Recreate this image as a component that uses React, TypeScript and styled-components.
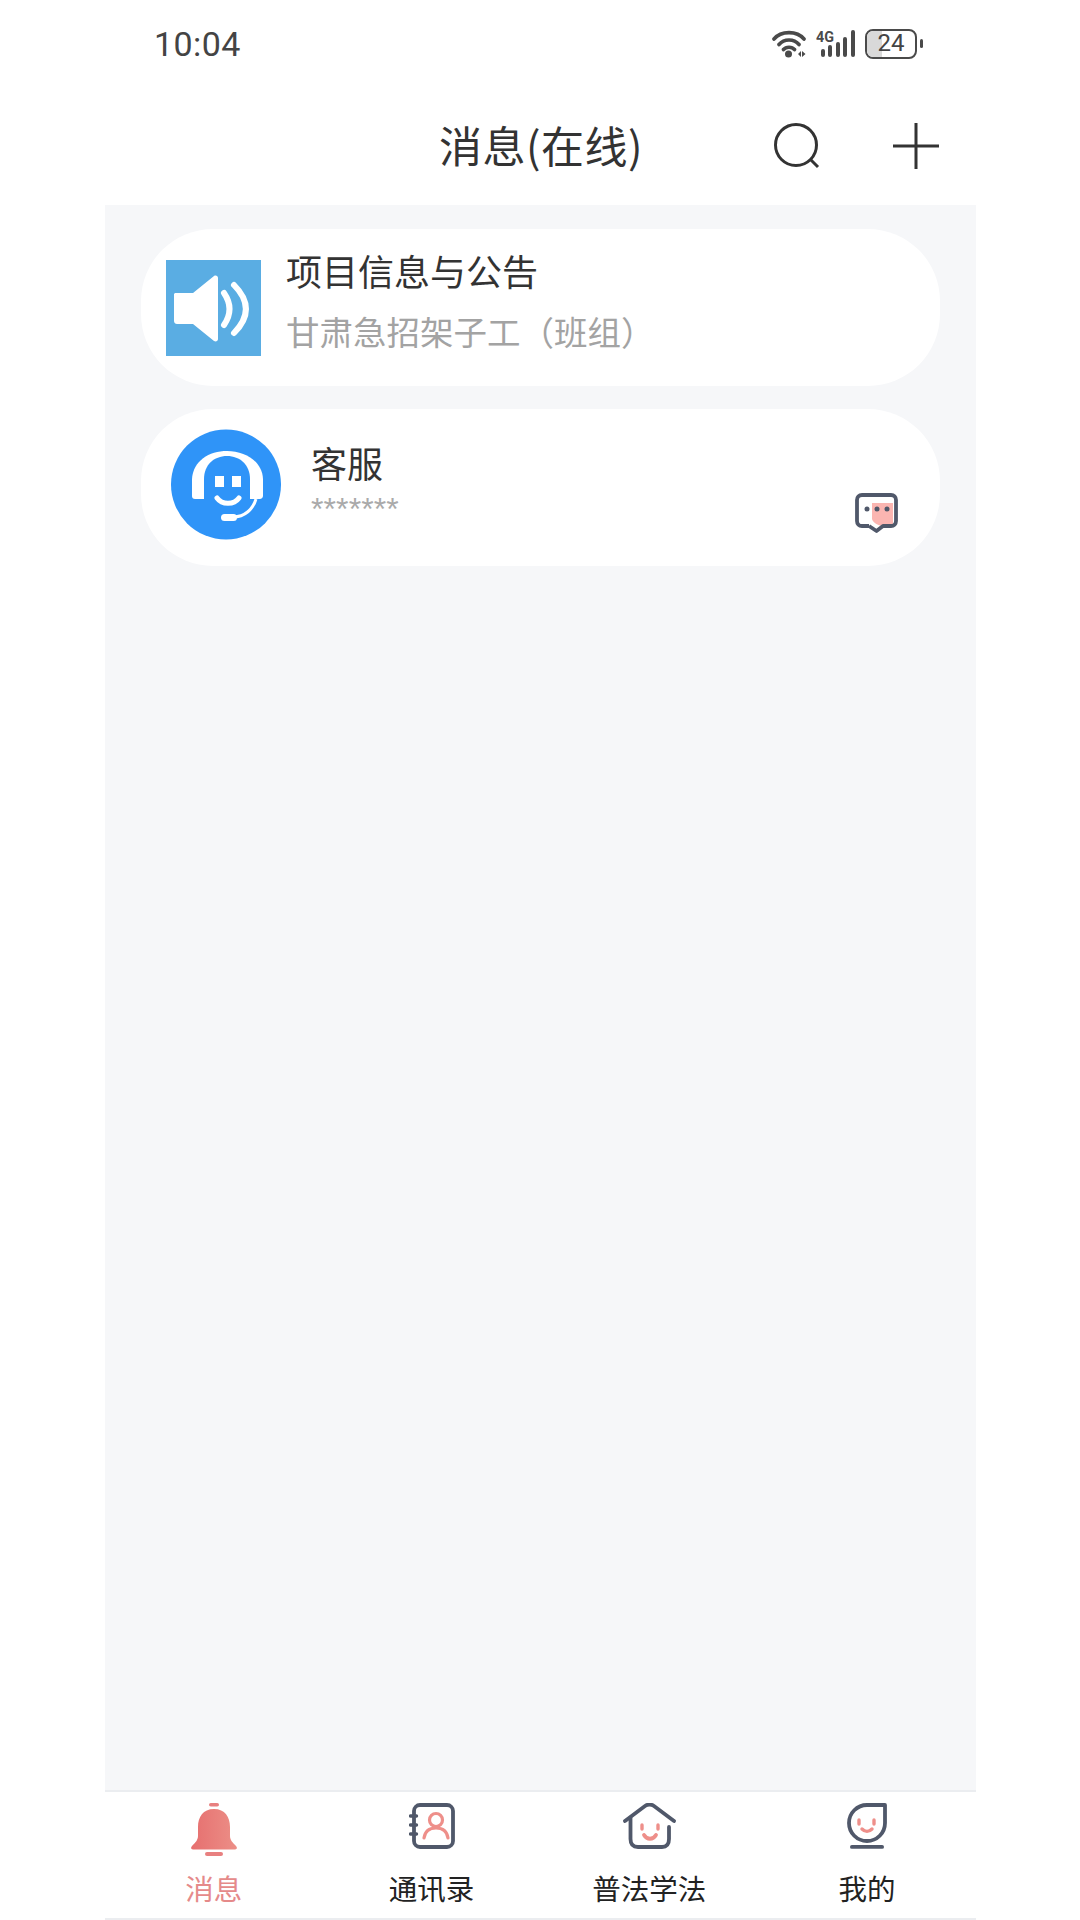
import React from "react";
import styled, { createGlobalStyle } from "styled-components";

const Global = createGlobalStyle`
  html, body { margin: 0; padding: 0; background: #fff; }
  * { box-sizing: border-box; }
  body { font-family: "Noto Sans CJK SC", "Noto Sans", sans-serif; }
`;
const Screen = styled.div`
  width: 871px; height: 1920px; margin-left: 105px; display: flex; flex-direction: column; background: #fff;
`;
const StatusBar = styled.div`
  height: 87px; display: flex; justify-content: space-between; align-items: center; padding: 0 53px 0 49px;
`;
const Clock = styled.span`
  font-family: Roboto, sans-serif; font-size: 34px; color: #444; letter-spacing: 0.4px;
`;
const NavBar = styled.div`
  height: 118px; display: flex; align-items: center; position: relative; padding: 0 37px 0 0; justify-content: flex-end; gap: 73px;
`;
const Title = styled.h1`
  position: absolute; left: 334px; top: 29px; margin: 0; font-size: 43px; line-height: 56px; font-weight: 400; color: #333; letter-spacing: 0.5px;
`;
const Content = styled.main`
  flex: 1; background: #f6f7f9; padding: 24px 36px 0; display: flex; flex-direction: column; gap: 23px;
`;
const Card = styled.div<{ $gap: number; $pad: number }>`
  height: 157px; border-radius: 72px; background: #fff; display: flex; align-items: center;
  gap: ${(p) => p.$gap}px; padding-left: ${(p) => p.$pad}px; position: relative;
`;
const CardText = styled.div<{ $lift: number }>`
  display: flex; flex-direction: column; margin-bottom: ${(p) => p.$lift}px;
`;
const CardTitle = styled.div`
  font-size: 36px; line-height: 50px; color: #333;
`;
const CardSub = styled.div`
  font-size: 33.5px; line-height: 46px; margin-top: 13px; color: #a3a3a3;
`;
const Stars = styled.div`
  font-family: "Liberation Sans", sans-serif; font-size: 32px; line-height: 28px; color: #aaa; margin-top: 8px; letter-spacing: 0.1px;
`;
const AvatarSlot = styled.div`
  display: flex; margin-bottom: 6px;
`;
const ChatBadge = styled.div`
  position: absolute; right: 42px; bottom: 33px; width: 43px; height: 40px; display: flex;
`;
const TabBar = styled.nav`
  height: 130px; border-top: 2px solid #ebedf0; border-bottom: 2px solid #ebedf0; display: grid; grid-template-columns: repeat(4, 1fr); background: #fff;
`;
const Tab = styled.div`
  display: flex; flex-direction: column; align-items: center; padding-top: 11px;
`;
const TabIcon = styled.div`
  height: 56px; display: flex; align-items: flex-start; justify-content: center;
`;
const TabLabel = styled.span<{ $active?: boolean }>`
  font-size: 28.5px; line-height: 40px; margin-top: 9px; color: ${(p) => (p.$active ? "#e58a8a" : "#222")};
`;

const Wifi = () => (
  <svg width="34" height="28" viewBox="0 0 34 28" fill="none">
    <path d="M2 9C9 .5 25 .5 32 9M7 14.500C12 8.500 22 8.500 27 14.500M11.500 19.500C14 16.500 20 16.500 22.500 19.500" stroke="#4a4a4a" strokeWidth="3.600" strokeLinecap="round" />
    <circle cx="16.500" cy="24" r="3.500" fill="#4a4a4a" />
    <path d="M26 24l3-3v6zM30 21l3.500 3-3.500 3z" fill="#4a4a4a" />
  </svg>
);
const Signal = () => (
  <svg width="39" height="34" viewBox="0 -3 39 34">
    <text x="0" y="11.500" fontFamily="Roboto, sans-serif" fontSize="15" fontWeight="700" fill="#4a4a4a" textLength="18" lengthAdjust="spacingAndGlyphs">4G</text>
    {[
      [5, 19, 8],
      [12, 15, 12],
      [20, 12, 15],
      [27, 7, 20],
      [35, 0, 27],
    ].map(([x, y, h]) => (
      <rect key={x} x={x} y={y} width="4" height={h} rx="2" fill="#4a4a4a" />
    ))}
  </svg>
);
const BatteryWrap = styled.div`
  position: relative; width: 52px; height: 30px; border: 2.500px solid #4a4a4a; border-radius: 8px; overflow: hidden;
  display: flex; align-items: center; justify-content: center;
`;
const BatteryFill = styled.div`
  position: absolute; left: 0; top: 0; bottom: 0; width: 15px; background: #d9d9d9;
`;
const BatteryText = styled.span`
  position: relative; font-family: Roboto, sans-serif; font-size: 24px; line-height: 25px; font-weight: 400; color: #444;
`;
const BatteryCap = styled.div`
  width: 3px; height: 9px; background: #4a4a4a; border-radius: 2px;
`;
const StatusIcons = styled.div`
  display: flex; align-items: center; gap: 10px;
`;
const BatteryGroup = styled.div`
  display: flex; align-items: center; gap: 3px;
`;

const Bell = () => (
  <svg width="46" height="53" viewBox="0 0 46 53">
    <defs>
      <linearGradient id="bell" x1="0" x2="1" y1="0" y2="0">
        <stop offset="0" stopColor="#e66f6f" />
        <stop offset="1" stopColor="#ec8f87" />
      </linearGradient>
    </defs>
    <rect x="18" y="0" width="10" height="3.500" rx="1.750" fill="#e88080" />
    <path d="M23 6C12 6 7 14 7 24V33C7 37 4 40 1 43C-.5 44.500 0 46.500 2 46.500H44C46 46.500 46.500 44.500 45 43C42 40 39 37 39 33V24C39 14 34 6 23 6Z" fill="url(#bell)" />
    <rect x="14" y="49" width="18" height="4" rx="2" fill="#e88080" />
  </svg>
);
const Book = () => (
  <svg width="46" height="46" viewBox="0 0 46 46" fill="none">
    <rect x="5" y="2" width="39" height="42" rx="6" stroke="#50586a" strokeWidth="3.800" />
    <path d="M1.500 13h6M1.500 22h6M1.500 31h6" stroke="#50586a" strokeWidth="3.400" strokeLinecap="round" />
    <circle cx="27" cy="17" r="6.500" stroke="#ee8f8a" strokeWidth="3.200" />
    <path d="M15 35C16 28 21 25 27 25S38 28 39 35" stroke="#ee8f8a" strokeWidth="3.200" strokeLinecap="round" />
  </svg>
);
const Home = () => (
  <svg width="53" height="46" viewBox="0 0 53 46" fill="none">
    <path d="M2 18L22 3C25 1 28 1 31 3L51 18" stroke="#50586a" strokeWidth="3.800" strokeLinecap="round" />
    <path d="M7.500 15V36C7.500 41 10 44 15 44H39C44 44 46 41 46 36V24" stroke="#50586a" strokeWidth="3.800" strokeLinecap="round" />
    <path d="M19 22v4M35 22v4" stroke="#ee8f8a" strokeWidth="3.400" strokeLinecap="round" />
    <path d="M21 32C24 37 30 37 33 32" stroke="#ee8f8a" strokeWidth="3.800" strokeLinecap="round" />
  </svg>
);
const Mine = () => (
  <svg width="40" height="46" viewBox="0 0 40 46" fill="none">
    <path d="M20 2H38V20C38 30 30 38 20 38S2 30 2 20 10 2 20 2Z" stroke="#50586a" strokeWidth="3.800" strokeLinejoin="round" />
    <rect x="3" y="42" width="34" height="3.800" rx="1.900" fill="#50586a" />
    <path d="M12 17v4M27 17v4" stroke="#ee8f8a" strokeWidth="3.400" strokeLinecap="round" />
    <path d="M15 26C18 29 22 29 25 26" stroke="#ee8f8a" strokeWidth="3.400" strokeLinecap="round" />
  </svg>
);
const Speaker = () => (
  <svg width="95" height="96" viewBox="0 0 95 96">
    <rect width="95" height="96" fill="#5aade3" />
    <path d="M9 33H27L48 16C50 15 52 16 52 18V79C52 81 50 82 48 81L27 64H11C9.500 64 8 63 8 61V34Z" fill="#fff" />
    <path d="M58 33Q69 49 58 65" stroke="#fff" strokeWidth="6" strokeLinecap="round" fill="none" />
    <path d="M68 25Q92 49 68 73" stroke="#fff" strokeWidth="6" strokeLinecap="round" fill="none" />
  </svg>
);
const Agent = () => (
  <svg width="110" height="111" viewBox="0 0 110 111">
    <circle cx="55" cy="55.500" r="55" fill="#2f94f8" />
    <path d="M21 50C22 32 38 22 56 22S91 32 92 50V67C92 69 90 70 89 70H24C22 70 21 69 21 67Z" fill="#fff" />
    <path d="M33 50C33 36 43 27 56 27S79 36 79 50V72H33Z" fill="#2f94f8" />
    <rect x="33" y="68" width="46" height="6" fill="#2f94f8" />
    <rect x="44" y="47" width="9" height="11" fill="#fff" />
    <rect x="61" y="47" width="9" height="11" fill="#fff" />
    <path d="M46 69C51 76 63 76 68 69" stroke="#fff" strokeWidth="5" strokeLinecap="round" fill="none" />
    <path d="M85 70C82 80 74 88 62 88" stroke="#fff" strokeWidth="3" fill="none" />
    <rect x="50" y="85" width="16" height="7" rx="3.500" fill="#fff" />
  </svg>
);
const Chat = () => (
  <svg width="43" height="40" viewBox="0 0 43 40" fill="none">
    <path d="M17 10H38V33H28C24 33 18 30 17 26Z" fill="#fbb5b1" />
    <path d="M14 33H7C4 33 2 31 2 28V7C2 4 4 2 7 2H36C39 2 41 4 41 7V28C41 31 39 33 36 33H28L21.500 38L14 33" stroke="#50586a" strokeWidth="3.800" strokeLinejoin="round" />
    <circle cx="12" cy="16" r="2.500" fill="#50586a" />
    <circle cx="22" cy="16" r="2.500" fill="#50586a" />
    <circle cx="32" cy="16" r="2.500" fill="#50586a" />
  </svg>
);

export default function App() {
  return (
    <Screen>
      <Global />
      <StatusBar>
        <Clock>10:04</Clock>
        <StatusIcons>
          <Wifi />
          <Signal />
          <BatteryGroup>
            <BatteryWrap>
              <BatteryFill />
              <BatteryText>24</BatteryText>
            </BatteryWrap>
            <BatteryCap />
          </BatteryGroup>
        </StatusIcons>
      </StatusBar>
      <NavBar>
        <Title>消息(在线)</Title>
        <svg width="46" height="46" viewBox="0 0 46 46" fill="none">
          <circle cx="22" cy="22" r="20.500" stroke="#333" strokeWidth="3" />
          <path d="M36 36L44 44" stroke="#333" strokeWidth="3" />
        </svg>
        <svg width="46" height="46" viewBox="0 0 46 46" fill="none">
          <path d="M0 23H46M23 0V46" stroke="#333" strokeWidth="3" />
        </svg>
      </NavBar>
      <Content>
        <Card $gap={25} $pad={25}>
          <Speaker />
          <CardText $lift={16}>
            <CardTitle>项目信息与公告</CardTitle>
            <CardSub>甘肃急招架子工（班组）</CardSub>
          </CardText>
        </Card>
        <Card $gap={30} $pad={30}>
          <AvatarSlot>
            <Agent />
          </AvatarSlot>
          <CardText $lift={16}>
            <CardTitle>客服</CardTitle>
            <Stars>*******</Stars>
          </CardText>
          <ChatBadge>
            <Chat />
          </ChatBadge>
        </Card>
      </Content>
      <TabBar>
        <Tab>
          <TabIcon><Bell /></TabIcon>
          <TabLabel $active>消息</TabLabel>
        </Tab>
        <Tab>
          <TabIcon><Book /></TabIcon>
          <TabLabel>通讯录</TabLabel>
        </Tab>
        <Tab>
          <TabIcon><Home /></TabIcon>
          <TabLabel>普法学法</TabLabel>
        </Tab>
        <Tab>
          <TabIcon><Mine /></TabIcon>
          <TabLabel>我的</TabLabel>
        </Tab>
      </TabBar>
    </Screen>
  );
}
